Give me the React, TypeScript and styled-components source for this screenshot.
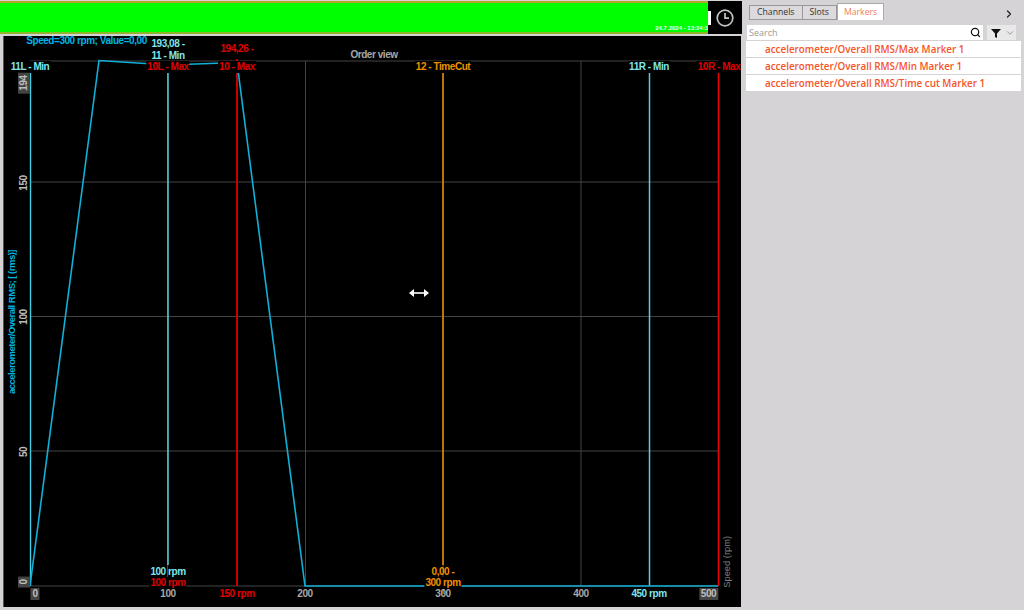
import React from 'react';
import styled, {createGlobalStyle} from 'styled-components';
import {ChevronDown, ChevronRight, Search} from 'lucide-react';

const GlobalStyle = createGlobalStyle`
	html, body {
		margin:0;
		padding:0;
		background:#d6d3d6;
		overflow:hidden;
	}
`;

const Page = styled.div`
	width:1024px;
	height:610px;
	display:flex;
	background:#d6d3d6;
	font-family:"Liberation Sans", Arial, sans-serif;
`;

const LeftColumn = styled.div`
	width:745px;
	display:flex;
	flex-direction:column;
	flex-shrink:0;
`;

const TimeStrip = styled.div`
	height:33px;
	margin-top:1px;
	display:flex;
	background:#000;
	margin-right:3px;
`;

const GreenBar = styled.div`
	flex:1;
	display:flex;
	align-items:flex-end;
	justify-content:flex-end;
	background:#00ff00;
	border-top:2px solid #b5a52c;
	border-bottom:2px solid #8fb52c;
	box-sizing:border-box;
	overflow:hidden;
`;

const TimeStamp = styled.span`
	font-size:6px;
	font-weight:bold;
	color:#e8ffe8;
	white-space:nowrap;
	padding-bottom:1px;
`;

const ClockBox = styled.div`
	width:34px;
	display:flex;
	align-items:center;
	color:#c4c4c4;
`;

const Notch = styled.div`
	width:3px;
	height:14px;
	background:#fff;
	margin-right:5px;
`;

const ChartFrame = styled.div`
	position:relative;
	width:737px;
	height:571px;
	margin:2px 0 0 4px;
	background:#000;
	box-shadow:-1px 0 0 #555;
	overflow:hidden;
`;

const Plot = styled.svg`
	position:absolute;
	left:0;
	top:0;
`;

const ChartLabel = styled.span<{$x:number; $y:number; $color:string; $bg?:boolean}>`
	position:absolute;
	left:${p => p.$x}px;
	top:${p => p.$y}px;
	transform:translateX(-50%);
	color:${p => p.$color};
	background:${p => p.$bg ? '#000' : 'transparent'};
	font-size:10px;
	font-weight:bold;
	letter-spacing:-0.45px;
	line-height:12px;
	padding:0 1px;
	white-space:nowrap;
`;

const AxisBox = styled.span<{$x:number; $y:number}>`
	position:absolute;
	left:${p => p.$x}px;
	top:${p => p.$y}px;
	transform:translateX(-50%);
	background:#444;
	color:#bdbdbd;
	font-size:10px;
	font-weight:bold;
	letter-spacing:-0.45px;
	line-height:12px;
	padding:0 2px;
`;

const YTick = styled.span<{$y:number; $box?:boolean}>`
	position:absolute;
	left:14px;
	top:${p => p.$y}px;
	transform:translateY(-50%) rotate(180deg);
	writing-mode:vertical-rl;
	background:${p => p.$box ? '#444' : 'transparent'};
	color:#bdbdbd;
	font-size:10px;
	font-weight:bold;
	letter-spacing:-0.45px;
	line-height:12px;
	padding:${p => p.$box ? 3 : 1}px 0;
	width:12px;
	text-align:center;
	white-space:nowrap;
`;

const YAxisTitle = styled.span`
	position:absolute;
	left:3px;
	top:214px;
	transform:rotate(180deg);
	writing-mode:vertical-rl;
	color:#00b4e4;
	font-size:9.5px;
	font-weight:bold;
	letter-spacing:-0.5px;
	line-height:10px;
	white-space:nowrap;
`;

const SpeedTitle = styled.span`
	position:absolute;
	left:718px;
	top:500px;
	transform:rotate(180deg);
	writing-mode:vertical-rl;
	color:#808080;
	font-size:9.3px;
	line-height:10px;
	white-space:nowrap;
`;

const Cursor = styled.svg`
	position:absolute;
	left:405px;
	top:251px;
`;

const SidePanel = styled.div`
	flex:1;
	display:flex;
	flex-direction:column;
	font-family:"Open Sans", "Noto Sans", sans-serif;
	padding:3px 3px 0 1px;
	min-width:0;
`;

const TabRow = styled.div`
	display:flex;
	align-items:flex-end;
	height:17px;
	padding-left:4px;
	color:#222;
`;

const Tab = styled.div<{$active?:boolean}>`
	height:${p => p.$active ? 16 : 13}px;
	line-height:${p => p.$active ? 16 : 13}px;
	padding:0 ${p => p.$active ? 6 : 7}px;
	margin-left:${p => p.$active ? 0 : -1}px;
	font-size:8.7px;
	color:${p => p.$active ? '#f08060' : '#333'};
	background:${p => p.$active ? '#fff' : '#dcdadc'};
	border:1px solid ${p => p.$active ? '#aaa' : '#999'};
	border-bottom:${p => p.$active ? 'none' : '1px solid #999'};
`;

const TabArrow = styled.div`
	margin-left:auto;
	align-self:flex-start;
	margin-right:6px;
	color:#222;
`;

const SearchRow = styled.div`
	display:flex;
	height:15px;
	margin-top:5px;
	padding:0 5px 0 1px;
	gap:4px;
`;

const SearchBox = styled.div`
	flex:1;
	display:flex;
	align-items:center;
	justify-content:space-between;
	background:#fff;
	padding:0 2px 0 2px;
	font-size:9px;
	color:#999;
`;

const FilterBox = styled.div`
	width:29px;
	display:flex;
	align-items:center;
	justify-content:space-between;
	background:#e9e8e9;
	padding:0 1px 0 4px;
	box-sizing:border-box;
	color:#888;
`;

const MarkerList = styled.div`
	display:flex;
	flex-direction:column;
	margin-top:1px;
	gap:1px;
`;

const MarkerRow = styled.div`
	height:16px;
	line-height:16px;
	background:#fff;
	padding-left:19px;
	font-size:9.85px;
	font-weight:600;
	color:#f4552a;
	white-space:nowrap;
`;

const gridX = [163.5, 301.5, 439, 577, 714.5];
const gridY = [146, 280.5, 415];

const labels = [
	{x: 26, y: 25, c: '#7fe6ee', t: '11L - Min', bg: true},
	{x: 164, y: 25, c: '#e00000', t: '10L - Max', bg: true},
	{x: 164, y: 14, c: '#7fe6ee', t: '11 - Min', bg: false},
	{x: 164, y: 2, c: '#7fe6ee', t: '193,08 -', bg: false},
	{x: 233, y: 25, c: '#e00000', t: '10 - Max', bg: true},
	{x: 233, y: 7, c: '#e00000', t: '194,26 -', bg: false},
	{x: 439, y: 25, c: '#f09000', t: '12 - TimeCut', bg: true},
	{x: 645, y: 25, c: '#7fe6ee', t: '11R - Min', bg: true},
	{x: 715, y: 25, c: '#e00000', t: '10R - Max', bg: true},
	{x: 164, y: 530, c: '#7fe6ee', t: '100 rpm', bg: false},
	{x: 164, y: 541, c: '#e00000', t: '100 rpm', bg: true},
	{x: 233, y: 552, c: '#e00000', t: '150 rpm', bg: false},
	{x: 645, y: 552, c: '#7fe6ee', t: '450 rpm', bg: false},
	{x: 439, y: 530, c: '#f09000', t: '0,00 -', bg: false},
	{x: 439, y: 541, c: '#f09000', t: '300 rpm', bg: true},
	{x: 164, y: 552, c: '#a8a8a8', t: '100', bg: false},
	{x: 301, y: 552, c: '#a8a8a8', t: '200', bg: false},
	{x: 439, y: 552, c: '#a8a8a8', t: '300', bg: false},
	{x: 577, y: 552, c: '#a8a8a8', t: '400', bg: false},
	{x: 370, y: 13, c: '#a8a8a8', t: 'Order view', bg: false},
];

const markerNames = [
	'accelerometer/Overall RMS/Max Marker 1',
	'accelerometer/Overall RMS/Min Marker 1',
	'accelerometer/Overall RMS/Time cut Marker 1',
];

const OrderChart = () => (
	<ChartFrame>
		<Plot width={737} height={571}>
			{gridX.map(x => <line key={x} x1={x} x2={x} y1={25} y2={550} stroke="#444" />)}
			{gridY.map(y => <line key={y} x1={26} x2={715} y1={y} y2={y} stroke="#444" />)}
			<line x1={26} x2={715} y1={25} y2={25} stroke="#444" />
			<line x1={26} x2={715} y1={550} y2={550} stroke="#444" />
			<line x1={26.5} x2={26.5} y1={36} y2={550} stroke="#3fd0e4" strokeWidth={1.4} />
			<line x1={164} x2={164} y1={36} y2={529} stroke="#50d0dc" strokeWidth={1.5} />
			<line x1={233} x2={233} y1={23} y2={550} stroke="#e80000" strokeWidth={1.7} />
			<line x1={439} x2={439} y1={36} y2={529} stroke="#f09000" strokeWidth={1.5} />
			<line x1={439} x2={439} y1={550} y2={558} stroke="#f09000" strokeWidth={1.2} />
			<line x1={645.5} x2={645.5} y1={36} y2={550} stroke="#50d0dc" strokeWidth={1.5} />
			<line x1={714.5} x2={714.5} y1={36} y2={550} stroke="#e80000" strokeWidth={1.7} />
			<polyline
				points="26,550 95,24.5 164,29 233,26.5 301,550 714,550"
				fill="none"
				stroke="#10b0d8"
				strokeWidth={1.6}
			/>
		</Plot>
		{labels.map(l => (
			<ChartLabel key={l.t + l.x + l.y} $x={l.x} $y={l.y} $color={l.c} $bg={l.bg}>{l.t}</ChartLabel>
		))}
		<ChartLabel $x={82.5} $y={-1} $color="#00b4e4">Speed=300 rpm; Value=0,00</ChartLabel>
		<AxisBox $x={31} $y={552}>0</AxisBox>
		<AxisBox $x={704.5} $y={552}>500</AxisBox>
		<YTick $y={47} $box>194</YTick>
		<YTick $y={147}>150</YTick>
		<YTick $y={281}>100</YTick>
		<YTick $y={416}>50</YTick>
		<YTick $y={546} $box>0</YTick>
		<YAxisTitle>accelerometer/Overall RMS; [ (rms)]</YAxisTitle>
		<SpeedTitle>Speed (rpm)</SpeedTitle>
		<Cursor width={20} height={12} viewBox="0 0 20 12">
			<path d="M3 6h14" stroke="#fff" strokeWidth={1.6} />
			<path d="M0 6l5-4v8zM20 6l-5-4v8z" fill="#fff" />
		</Cursor>
	</ChartFrame>
);

const App = () => (
	<Page>
		<GlobalStyle />
		<LeftColumn>
			<TimeStrip>
				<GreenBar>
					<TimeStamp>24.7.2024 - 13:24:3</TimeStamp>
				</GreenBar>
				<ClockBox>
					<Notch />
					<svg width="18" height="18" viewBox="0 0 18 18" fill="none" stroke="currentColor" strokeWidth="1.7">
						<circle cx="9" cy="9" r="7.8" />
						<path d="M9 4v5.2h4" />
					</svg>
				</ClockBox>
			</TimeStrip>
			<OrderChart />
		</LeftColumn>
		<SidePanel>
			<TabRow>
				<Tab>Channels</Tab>
				<Tab>Slots</Tab>
				<Tab $active>Markers</Tab>
				<TabArrow><ChevronRight size={12} strokeWidth={2.5} /></TabArrow>
			</TabRow>
			<SearchRow>
				<SearchBox>
					Search
					<Search size={11} color="#111" strokeWidth={2.6} />
				</SearchBox>
				<FilterBox>
					<svg width="10" height="10" viewBox="0 0 10 10"><path d="M0 1h10L6 5.5V10L4 9V5.5z" fill="#111" /></svg>
					<ChevronDown size={10} />
				</FilterBox>
			</SearchRow>
			<MarkerList>
				{markerNames.map(n => <MarkerRow key={n}>{n}</MarkerRow>)}
			</MarkerList>
		</SidePanel>
	</Page>
);

export default App;
